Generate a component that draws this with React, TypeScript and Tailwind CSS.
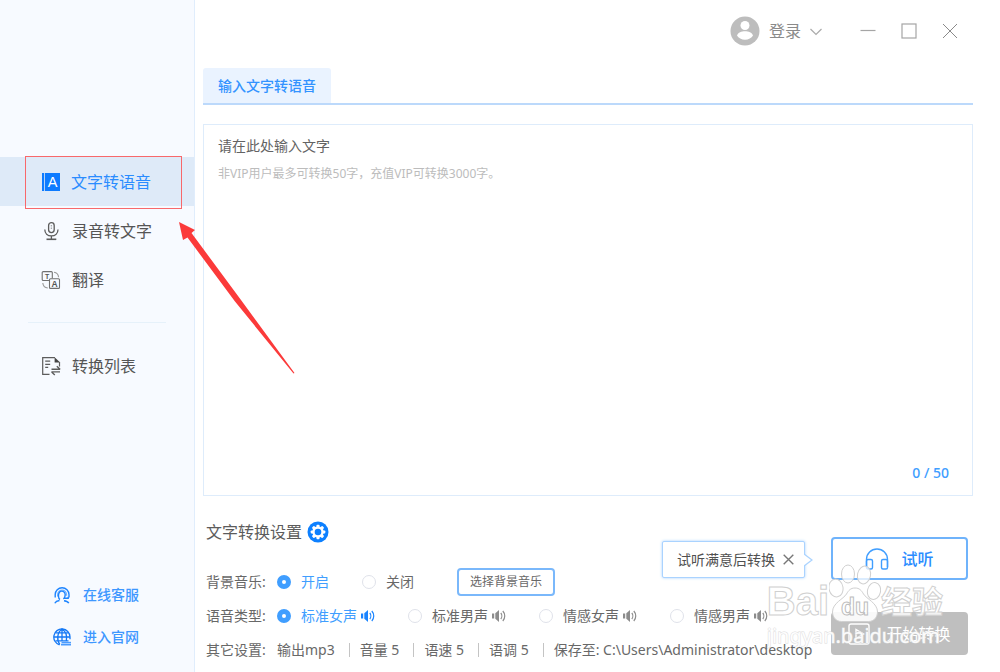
import { useState } from "react";
import type { ReactNode } from "react";

function BookIcon() {
  return (
    <svg viewBox="0 0 20 20" className="size-5" aria-hidden="true">
      <rect x="1" y="1" width="2.2" height="18" fill="#0d7bff" />
      <rect x="4" y="1" width="15" height="18" fill="#0d7bff" />
      <text x="11.6" y="15.2" fontSize="14.5" textAnchor="middle" fill="#fff" fontFamily="Liberation Sans, sans-serif">A</text>
    </svg>
  );
}

function MicIcon() {
  return (
    <svg viewBox="0 0 20 20" className="size-5" fill="none" stroke="#5c5c5c" strokeWidth="1.3" aria-hidden="true">
      <rect x="7.6" y="1.6" width="5.6" height="10" rx="2.8" />
      <path d="M10.4 4.5v.8M10.4 6.8v.8" />
      <path d="M3.8 8.5c0 4 2.8 6.4 6.6 6.4S17 12.5 17 8.5M10.4 15v3" />
      <path d="M5.5 18.3h9.8" strokeWidth="1.6" />
    </svg>
  );
}

function TranslateIcon() {
  return (
    <svg viewBox="0 0 20 20" className="size-5" fill="none" stroke="#707070" strokeWidth="1.1" aria-hidden="true">
      <path d="M8.5 10.5H2.2A1 1 0 0 1 1.2 9.5V2.6a1 1 0 0 1 1-1h8.1a1 1 0 0 1 1 1v5.6" />
      <rect x="8.5" y="8.8" width="10" height="9.6" rx="1" />
      <path d="M13 2.2c2.6.3 4.3 2 4.6 5M1.8 13c.3 3 2.2 4.8 5 5" stroke="#999" />
      <text x="6.2" y="9" fontSize="7" textAnchor="middle" fill="#555" stroke="none" fontFamily="Liberation Sans, sans-serif" fontWeight="700">T</text>
      <text x="13.5" y="16.8" fontSize="8.5" textAnchor="middle" fill="#555" stroke="none" fontFamily="Liberation Sans, sans-serif" fontWeight="700">A</text>
    </svg>
  );
}

function ListIcon() {
  return (
    <svg viewBox="0 0 20 20" className="size-5" fill="none" stroke="#5c5c5c" strokeWidth="1.2" aria-hidden="true">
      <path d="M8.5 18.4H1.7V1.7h12.2" />
      <path d="M13.6 1.2v5.2h5.6z" fill="#444" stroke="none" />
      <path d="M18.5 6v4.5M4.2 5.2h5M4.2 8.3h5M4.2 11.4h3" />
      <path d="M10.5 13.3h8.7M15.8 10.3l3.3 3M19 15.9h-8.6M10.6 16l3.2 2.9" strokeWidth="1.4" />
    </svg>
  );
}

function ServiceIcon() {
  return (
    <svg viewBox="0 0 18 18" className="size-[18px]" fill="none" stroke="#1d84ff" strokeWidth="1.4" aria-hidden="true">
      <path d="M2.2 11.5V8.6a6.9 6.9 0 0 1 13.8 0v2.9" />
      <path d="M4.7 10.5V8.5a4.4 4.4 0 0 1 8.8 0v1.2" opacity=".6" />
      <path d="M7 13.5c-2-1-2-5.8-.4-7.5 2-1.8 5.6-.6 5.6 2.8 0 1.8-.6 3.2-1.8 4.2M10.5 12.2h4.7v-1.5" />
      <path d="M1.8 17.2c.8-1.6 2.3-2.3 4.7-2.7M11 14.7c2.2.2 4 .9 4.8 2.4" />
    </svg>
  );
}

function GlobeIcon() {
  return (
    <svg viewBox="0 0 18 18" className="size-[18px]" fill="none" stroke="#1478f5" strokeWidth="1.3" aria-hidden="true">
      <path d="M6.5 16.8A8.1 8.1 0 1 1 17 8.8v2.4" />
      <path d="M9 1v12.5M1 9h16M2.5 4.8h13M2.5 12.8h13M6.8 16.5C3.6 12 4 4.5 9 1c4.6 3.2 5.3 7.6 4.3 12" />
      <rect x="8.5" y="13.8" width="9.5" height="1.5" fill="#4a9bff" stroke="none" />
      <rect x="8" y="15.8" width="10" height="1.7" fill="#4a9bff" stroke="none" />
    </svg>
  );
}

function GearIcon() {
  return (
    <svg viewBox="0 0 22 22" className="size-[22px]" aria-hidden="true">
      <circle cx="11" cy="11" r="10.5" fill="#0d80ff" />
      <g fill="#fff">
        <circle cx="11" cy="11" r="5.7" />
        {[0, 45, 90, 135].map((a) => (
          <rect key={a} x="9.5" y="3.7" width="3" height="14.6" rx=".8" transform={`rotate(${a} 11 11)`} />
        ))}
      </g>
      <circle cx="11" cy="11" r="3.3" fill="#0d80ff" />
    </svg>
  );
}

function SpeakerIcon() {
  return (
    <svg viewBox="0 0 16 14" className="h-[14px] w-4" fill="none" stroke="currentColor" strokeWidth="1.2" aria-hidden="true">
      <path d="M1 4.5h2.2v5H1z" fill="currentColor" stroke="none" />
      <path d="M4.3 4.2 8 1v12L4.3 9.8z" fill="currentColor" stroke="none" />
      <path d="M9.8 4c1.3 1.6 1.3 4.4 0 6M11.8 2c2.6 2.8 2.6 7.2 0 10" />
    </svg>
  );
}

function CloseIcon({ className }: { className: string }) {
  return (
    <svg viewBox="0 0 16 16" className={className} fill="none" stroke="currentColor" aria-hidden="true">
      <path d="M1 1l14 14M15 1 1 15" />
    </svg>
  );
}

function NavItem({ icon, label, active }: { icon: ReactNode; label: string; active?: boolean }) {
  return (
    <button
      type="button"
      className={
        active
          ? "relative flex h-[49px] w-full items-center gap-[10px] bg-[#deeaf8] pl-[41px] text-base text-[#2a8cff]"
          : "flex h-[49px] w-full items-center gap-[11px] pl-[41px] text-base text-[#555]"
      }
    >
      {icon}
      <span>{label}</span>
      {active && <span className="absolute -top-px -bottom-[3px] left-[25px] right-3 border border-[#f8686b]" />}
    </button>
  );
}

function Radio({
  name,
  label,
  checked,
  onChange,
  speaker,
  className,
}: {
  name: string;
  label: string;
  checked: boolean;
  onChange: () => void;
  speaker?: boolean;
  className: string;
}) {
  return (
    <label className={`flex shrink-0 items-center ${className} ${checked ? "text-[#409eff]" : "text-[#686868]"}`}>
      <input
        type="radio"
        name={name}
        checked={checked}
        onChange={onChange}
        className="mr-[10px] size-[14px] shrink-0 appearance-none rounded-full border border-[#dfe2ea] bg-white checked:border-5 checked:border-[#409eff]"
      />
      {label}
      {speaker && (
        <span className={checked ? "ml-[3px] text-[#1a84ff]" : "ml-[3px] text-[#8c8c8c]"}>
          <SpeakerIcon />
        </span>
      )}
    </label>
  );
}

function Watermark() {
  return (
    <div className="pointer-events-none absolute right-[57px] bottom-[22px] select-none" aria-hidden="true">
      <div className="flex h-[58px] items-end font-['Liberation_Sans','Noto_Sans_CJK_SC',sans-serif] text-white/80 [-webkit-text-stroke:1px_#d0d0d0]">
        <span className="text-[40px] leading-[42px] font-bold">Bai</span>
        <svg viewBox="0 0 52 58" className="h-[58px] w-[52px]" fill="#fff" fillOpacity=".75" stroke="#d0d0d0">
          <ellipse cx="7" cy="24" rx="7" ry="9" transform="rotate(-10 7 24)" />
          <ellipse cx="19" cy="10" rx="6.5" ry="9" />
          <ellipse cx="35" cy="11" rx="6.5" ry="9" transform="rotate(12 35 11)" />
          <ellipse cx="45" cy="27" rx="6.5" ry="8.5" transform="rotate(12 45 27)" />
          <path fillOpacity=".9" d="M26 24c-4.5 0-6.5 2.5-8.5 6-3 5-14 9-14 18 0 5 3.5 9.5 9 9.5h27c5.5 0 9-4.5 9-9.5 0-9-11-13-14-18-2-3.5-4-6-8.5-6z" />
          <text x="26" y="51" fontSize="23" textAnchor="middle" fontWeight="700" stroke="#bdbdbd">du</text>
        </svg>
        <span className="text-[31px] leading-[38px] font-bold">经验</span>
      </div>
      <div className="font-['Noto_Sans',sans-serif] text-xl leading-[28px] text-white/90 [-webkit-text-stroke:1px_#dcdcdc] [paint-order:stroke]">
        jingyan.baidu.com
      </div>
    </div>
  );
}

const voices = ["标准女声", "标准男声", "情感女声", "情感男声"];
const outputs = ["输出mp3", "音量 5", "语速 5", "语调 5"];

export default function App() {
  const [text, setText] = useState("");
  const [music, setMusic] = useState("开启");
  const [voice, setVoice] = useState(voices[0]);
  const [tip, setTip] = useState(true);

  return (
    <div className="relative flex min-h-screen bg-white font-['Noto_Sans','Noto_Sans_CJK_SC',sans-serif] text-sm text-[#686868]">
      <aside className="flex w-[195px] shrink-0 flex-col justify-between border-r border-[#e0edfc] bg-[#f7faff] pt-[157px] pb-[14px]">
        <nav>
          <NavItem icon={<BookIcon />} label="文字转语音" active />
          <NavItem icon={<MicIcon />} label="录音转文字" />
          <NavItem icon={<TranslateIcon />} label="翻译" />
          <hr className="mx-7 my-[18px] border-[#e6f1fa]" />
          <NavItem icon={<ListIcon />} label="转换列表" />
        </nav>
        <div className="font-medium text-[#3d97ff]">
          <a href="#service" className="flex h-[42px] items-center gap-3 pl-[53px]">
            <ServiceIcon />
            在线客服
          </a>
          <a href="#site" className="flex h-[42px] items-center gap-3 pl-[53px]">
            <GlobeIcon />
            进入官网
          </a>
        </div>
      </aside>

      <main className="flex min-w-0 flex-1 flex-col pl-2">
        <header className="flex h-[62px] items-center justify-end gap-[25px] pr-[42px] text-[#8a8a8a]">
          <button type="button" className="mr-3 flex items-center text-base">
            <svg viewBox="0 0 30 30" className="mr-[9px] size-[30px]" aria-hidden="true">
              <circle cx="15" cy="15" r="14.5" fill="#bdbdbd" />
              <circle cx="15" cy="9.5" r="4.5" fill="#fff" />
              <path d="M7 19.5c1-3 4.5-4.2 8-4.2s7 1.2 8 4.2c-1.5 2.5-4.5 4.2-8 4.2s-6.5-1.7-8-4.2z" fill="#fff" />
            </svg>
            登录
            <svg viewBox="0 0 14 14" className="ml-2 size-[14px]" fill="none" stroke="#aaa" strokeWidth="1.2" aria-hidden="true">
              <path d="M1.5 5 7 10.5 12.5 5" />
            </svg>
          </button>
          <button type="button" aria-label="最小化">
            <svg viewBox="0 0 16 16" className="size-4" stroke="#a5a5a5" strokeWidth="1.2" aria-hidden="true">
              <path d="M.5 7.5h15" />
            </svg>
          </button>
          <button type="button" aria-label="最大化">
            <svg viewBox="0 0 16 16" className="size-4" fill="none" stroke="#a5a5a5" strokeWidth="1.2" aria-hidden="true">
              <rect x="1" y="1" width="14" height="14" />
            </svg>
          </button>
          <button type="button" aria-label="关闭窗口">
            <CloseIcon className="size-4" />
          </button>
        </header>

        <section className="flex flex-1 flex-col pr-[27px]">
          <div className="mt-[6px] flex border-b-2 border-[#bcd9fb]">
            <button type="button" className="h-[35px] rounded-t-[3px] bg-[#eaf3ff] px-[15px] font-medium text-[#3393ff]">
              输入文字转语音
            </button>
          </div>

          <div className="mt-[19px] flex flex-1 flex-col border border-[#deecfb] px-[14px] pt-[10px] pb-3">
            <label htmlFor="source" className="leading-[22px] text-[#636363]">
              请在此处输入文字
            </label>
            <textarea
              id="source"
              value={text}
              maxLength={50}
              onChange={(e) => setText(e.target.value)}
              placeholder="非VIP用户最多可转换50字，充值VIP可转换3000字。"
              className="mt-[7px] w-full flex-1 resize-none text-xs leading-5 outline-none placeholder:text-[#bcbcbc]"
            />
            <output htmlFor="source" className="pr-[9px] text-right leading-5 font-medium text-[#409eff]">
              {text.length} / 50
            </output>
          </div>

          <div className="flex justify-between pt-[19px] pb-[5px]">
            <div className="min-w-0 pl-[3px]">
              <h2 className="mb-4 flex h-[34px] items-center gap-[5px] text-base text-[#5c5c5c]">
                文字转换设置
                <button type="button" aria-label="设置">
                  <GearIcon />
                </button>
              </h2>

              <div className="flex h-[34px] items-center whitespace-nowrap">
                <span className="w-[71px] shrink-0">背景音乐:</span>
                <Radio name="music" label="开启" checked={music === "开启"} onChange={() => setMusic("开启")} className="w-[85px]" />
                <Radio name="music" label="关闭" checked={music === "关闭"} onChange={() => setMusic("关闭")} className="w-[95px]" />
                <button type="button" className="h-7 rounded-[4px] border-2 border-[#7ab8fb] px-[11px] text-xs">
                  选择背景音乐
                </button>
              </div>

              <div className="flex h-[34px] items-center whitespace-nowrap">
                <span className="w-[71px] shrink-0">语音类型:</span>
                {voices.map((v) => (
                  <Radio key={v} name="voice" label={v} checked={voice === v} onChange={() => setVoice(v)} speaker className="w-[131px]" />
                ))}
              </div>

              <div className="relative z-10 flex h-[34px] items-center whitespace-nowrap">
                <span className="w-[71px] shrink-0">其它设置:</span>
                {outputs.map((o) => (
                  <span key={o} className="mr-[10px] flex items-center">
                    {o}
                    <span className="ml-[14px] h-[14px] w-px bg-[#c4c4c4]" />
                  </span>
                ))}
                <span>保存至: C:\Users\Administrator\desktop</span>
              </div>
            </div>

            <div className="relative mt-[22px] mr-[5px] flex w-[137px] shrink-0 flex-col gap-8">
              <button
                type="button"
                className="flex h-[43px] items-center justify-center gap-3 rounded-[4px] border-2 border-[#6fb3fb] bg-white text-base font-medium text-[#2a8cff]"
              >
                <svg viewBox="0 0 24 22" className="h-[22px] w-6" fill="none" stroke="#409eff" strokeWidth="1.4" aria-hidden="true">
                  <path d="M1.5 19V11.5a10.5 10.5 0 0 1 21 0V19" />
                  <rect x="1.5" y="11.5" width="6" height="9.5" rx="1.5" />
                  <rect x="16.5" y="11.5" width="6" height="9.5" rx="1.5" />
                </svg>
                试听
              </button>
              <button type="button" className="flex h-[43px] items-center justify-center gap-4 rounded-[4px] bg-[#bfbfbf] text-base text-white">
                <svg viewBox="0 0 22 22" className="size-[22px]" fill="none" stroke="#fff" strokeWidth="1.4" aria-hidden="true">
                  <rect x="1" y="1" width="20" height="20" rx="2" />
                  <path d="M8 6.5v9l7.5-4.5z" />
                </svg>
                开始转换
              </button>

              {tip && (
                <div
                  role="tooltip"
                  className="absolute top-1 right-full mr-[26px] flex h-[37px] items-center gap-2 rounded-[2px] border border-[#aad3ff] bg-white pr-[10px] pl-[14px] whitespace-nowrap text-[#505050] shadow-[0_0_3px_#a5d0ff]"
                >
                  试听满意后转换
                  <button type="button" aria-label="关闭提示" onClick={() => setTip(false)}>
                    <CloseIcon className="size-[11px] stroke-2 text-[#777]" />
                  </button>
                  <svg viewBox="0 0 9 12" className="absolute top-3 -right-[9px] h-3 w-[9px]" aria-hidden="true">
                    <path d="M0 0 8 6 0 12" fill="#fff" stroke="#aad3ff" strokeWidth="1.3" />
                  </svg>
                </div>
              )}
            </div>
          </div>
        </section>
      </main>

      <Watermark />

      <svg viewBox="0 0 116 153" className="pointer-events-none absolute top-[222px] left-[179px] h-[153px] w-[116px]" aria-hidden="true">
        <path d="M0 0 16 8 12.5 11 62 78 115.5 151 114.5 151.5 56 79.5 8.5 15.5 4 18z" fill="#fb3a3a" />
      </svg>
    </div>
  );
}
